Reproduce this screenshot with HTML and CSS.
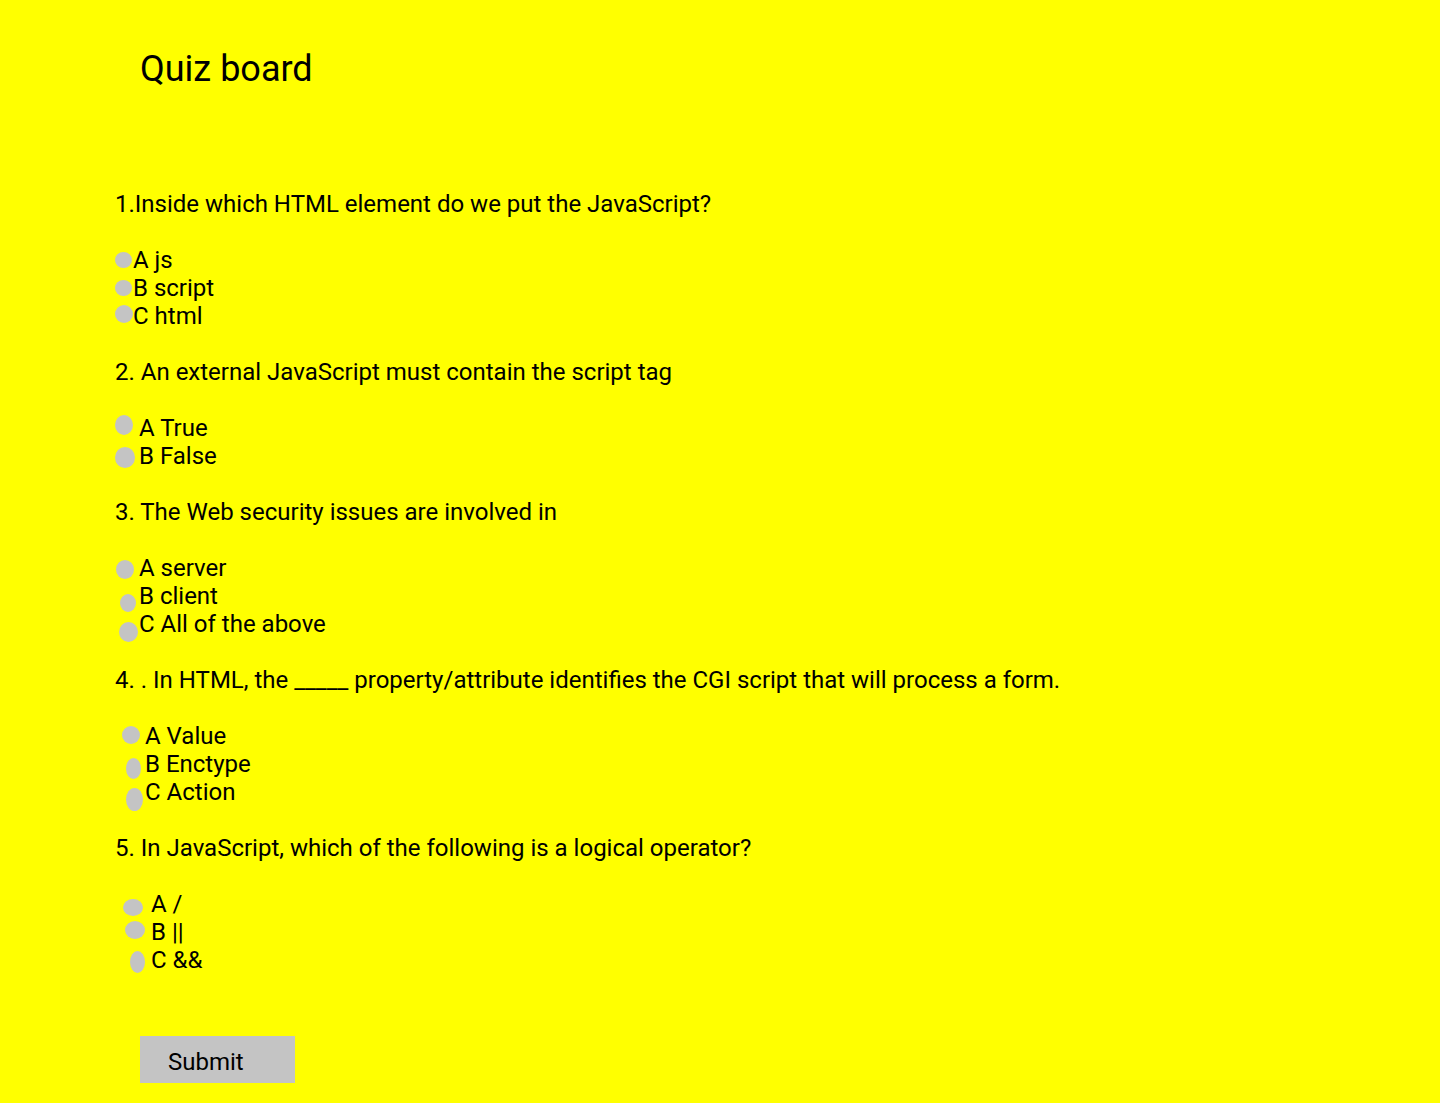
FILE: index.html
```html
<!DOCTYPE html>
<html lang="en">
<head>
<meta charset="utf-8">
<title>Quiz board</title>
<link rel="stylesheet" href="styles.css">
</head>
<body>
<header class="head">
  <h1 class="title">Quiz board</h1>
</header>
<form class="quiz">
  <div class="q">1.Inside which HTML element do we put the JavaScript?</div>
  <div class="blank"></div>
  <div class="opt g1"><span class="dot d11"></span><span class="lbl">A js</span></div>
  <div class="opt g1"><span class="dot d12"></span><span class="lbl">B script</span></div>
  <div class="opt g1"><span class="dot d13"></span><span class="lbl">C html</span></div>
  <div class="blank"></div>

  <div class="q">2. An external JavaScript must contain the script tag</div>
  <div class="blank"></div>
  <div class="opt g2"><span class="dot d21"></span><span class="lbl">A True</span></div>
  <div class="opt g2"><span class="dot d22"></span><span class="lbl">B False</span></div>
  <div class="blank"></div>

  <div class="q">3. The Web security issues are involved in</div>
  <div class="blank"></div>
  <div class="opt g3"><span class="dot d31"></span><span class="lbl">A server</span></div>
  <div class="opt g3"><span class="dot d32"></span><span class="lbl">B client</span></div>
  <div class="opt g3"><span class="dot d33"></span><span class="lbl">C All of the above</span></div>
  <div class="blank"></div>

  <div class="q">4. . In HTML, the _____ property/attribute identifies the CGI script that will process a form.</div>
  <div class="blank"></div>
  <div class="opt g4"><span class="dot d41"></span><span class="lbl">A Value</span></div>
  <div class="opt g4"><span class="dot d42"></span><span class="lbl">B Enctype</span></div>
  <div class="opt g4"><span class="dot d43"></span><span class="lbl">C Action</span></div>
  <div class="blank"></div>

  <div class="q">5. In JavaScript, which of the following is a logical operator?</div>
  <div class="blank"></div>
  <div class="opt g5"><span class="dot d51"></span><span class="lbl">A /</span></div>
  <div class="opt g5"><span class="dot d52"></span><span class="lbl">B ||</span></div>
  <div class="opt g5"><span class="dot d53"></span><span class="lbl">C &amp;&amp;</span></div>

  <div class="actions">
    <button type="button" class="submit">Submit</button>
  </div>
</form>
</body>
</html>
```

FILE: styles.css
```css
html, body {
  margin: 0;
  padding: 0;
  background: #ffff00;
}

body {
  font-family: Roboto, "Liberation Sans", sans-serif;
  color: #000;
  min-height: 1103px;
}

.head {
  padding: 48px 0 0 140px;
  height: 190px;
  box-sizing: border-box;
}

.title {
  margin: 0;
  font-size: 36px;
  font-weight: 400;
  line-height: 42px;
}

.quiz {
  padding-left: 115px;
  font-size: 24px;
  line-height: 28px;
}

.q, .blank, .opt {
  height: 28px;
}

.q {
  white-space: nowrap;
}

.opt {
  display: flex;
  align-items: flex-start;
}

.dot {
  display: block;
  flex: none;
  background: #c4c4c4;
  border-radius: 50%;
}

.lbl {
  white-space: nowrap;
}

/* group 1: label at 133 */
.d11 { margin: 6px 0 0 0; width: 17px; height: 16px; }
.d12 { margin: 6px 0 0 0; width: 17px; height: 16px; }
.d13 { margin: 3px 0 0 0; width: 18px; height: 18px; }
.d11 + .lbl { margin-left: 1px; }
.d12 + .lbl { margin-left: 1px; }
.d13 + .lbl { margin-left: 0; }

/* group 2: label at 139 */
.d21 { margin: 1px 0 0 0; width: 18px; height: 20px; }
.d22 { margin: 5px 0 0 0; width: 20px; height: 21px; }
.d21 + .lbl { margin-left: 6px; }
.d22 + .lbl { margin-left: 4px; }

/* group 3: label at 139 */
.d31 { margin: 6px 0 0 1px; width: 18px; height: 19px; }
.d32 { margin: 12px 0 0 5px; width: 16px; height: 18px; }
.d33 { margin: 12px 0 0 4px; width: 19px; height: 20px; }
.d31 + .lbl { margin-left: 5px; }
.d32 + .lbl { margin-left: 3px; }
.d33 + .lbl { margin-left: 1px; }

/* group 4: label at 145 */
.d41 { margin: 4px 0 0 7px; width: 18px; height: 18px; }
.d42 { margin: 8px 0 0 11px; width: 15px; height: 21px; }
.d43 { margin: 10px 0 0 11px; width: 17px; height: 23px; }
.d41 + .lbl { margin-left: 5px; }
.d42 + .lbl { margin-left: 4px; }
.d43 + .lbl { margin-left: 2px; }

/* group 5: label at 151 */
.d51 { margin: 9px 0 0 8px; width: 20px; height: 17px; }
.d52 { margin: 3px 0 0 10px; width: 20px; height: 18px; }
.d53 { margin: 5px 0 0 15px; width: 15px; height: 22px; }
.d51 + .lbl { margin-left: 8px; }
.d52 + .lbl { margin-left: 6px; }
.d53 + .lbl { margin-left: 6px; }

.actions {
  padding: 62px 0 0 25px;
}

.submit {
  display: block;
  width: 155px;
  height: 47px;
  margin: 0;
  padding: 5px 0 0 28px;
  border: none;
  border-radius: 0;
  background: #c4c4c4;
  color: #000;
  font-family: Roboto, "Liberation Sans", sans-serif;
  font-size: 24px;
  text-align: left;
  box-sizing: border-box;
}
```
